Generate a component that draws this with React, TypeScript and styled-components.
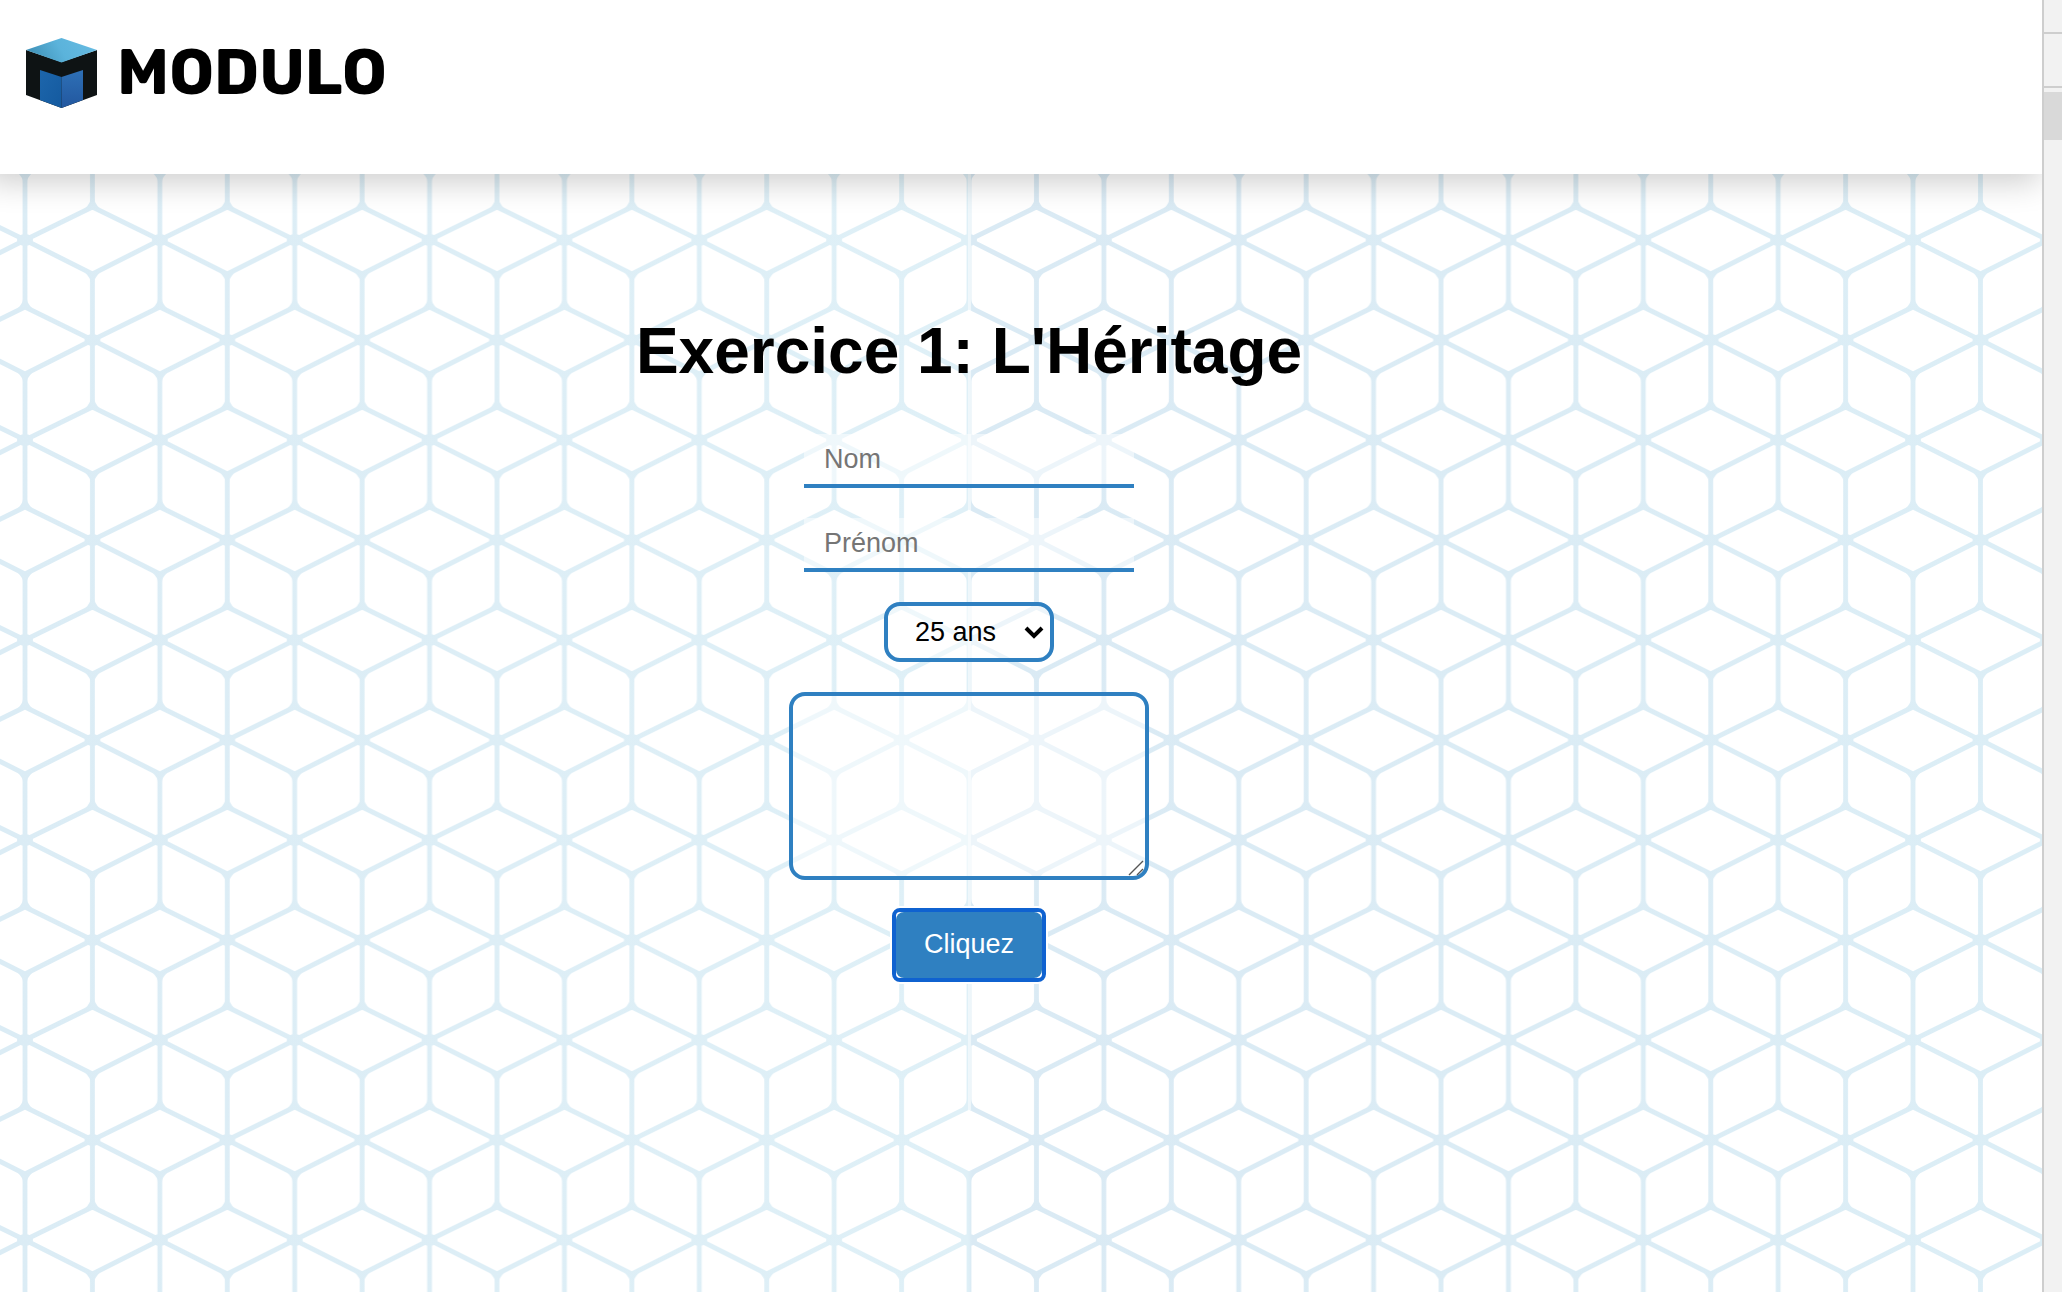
import React from "react";
import styled, { createGlobalStyle } from "styled-components";

const BLUE = "#2f80c1";

const GlobalStyle = createGlobalStyle`
  *, *::before, *::after { box-sizing: border-box; }
  body {
    margin: 0;
    background: #fff;
    font-family: "Liberation Sans", Arial, sans-serif;
  }
`;

const Shell = styled.div`
  display: flex;
  min-height: 100vh;
  overflow: hidden;
`;

const Page = styled.div`
  position: relative;
  flex: 1;
  min-width: 0;
  overflow: hidden;
`;

const Backdrop = styled.svg`
  position: absolute;
  inset: 0;
  width: 100%;
  height: 100%;
`;

const Header = styled.header`
  position: relative;
  height: 174px;
  padding: 38px 26px;
  background: #fff;
  box-shadow: -8px 2px 30px 6px rgba(0, 0, 0, 0.2);
`;

const Brand = styled.a`
  display: flex;
  align-items: center;
  gap: 20px;
  height: 70px;
  color: #000;
  text-decoration: none;
`;

const Cube = styled.svg`
  width: 71px;
  height: 70px;
`;

const Wordmark = styled.span`
  font-family: Rubik, Roboto, sans-serif;
  font-size: 63px;
  line-height: 70px;
  font-weight: 700;
`;

const Main = styled.main`
  position: relative;
  display: flex;
  flex-direction: column;
  align-items: center;
  padding: 140px 104px 80px 0;
`;

const Title = styled.h1`
  margin: 0 0 46px;
  font-size: 64px;
  line-height: 74px;
  font-weight: 700;
`;

const Form = styled.form`
  display: flex;
  flex-direction: column;
  align-items: center;
`;

const TextField = styled.input`
  width: 330px;
  height: 54px;
  margin-bottom: 30px;
  padding: 0 20px;
  border: 0;
  border-bottom: 4px solid ${BLUE};
  background: rgba(255, 255, 255, 0.5);
  font: 27px "Liberation Sans", Arial, sans-serif;
  outline: none;
  &::placeholder { color: #757575; }
`;

const SelectWrap = styled.div`
  position: relative;
  margin-bottom: 30px;
`;

const AgeSelect = styled.select`
  display: block;
  appearance: none;
  width: 170px;
  height: 60px;
  padding: 0 0 0 27px;
  border: 4px solid ${BLUE};
  border-radius: 16px;
  background: rgba(255, 255, 255, 0.5);
  color: #000;
  font: 27px "Liberation Sans", Arial, sans-serif;
`;

const Chevron = styled.svg`
  position: absolute;
  right: 10px;
  top: 23px;
  width: 20px;
  height: 14px;
  pointer-events: none;
`;

const MessageWrap = styled.div`
  position: relative;
  margin-bottom: 28px;
`;

const Message = styled.textarea`
  display: block;
  width: 360px;
  height: 188px;
  padding: 16px 20px;
  border: 4px solid ${BLUE};
  border-radius: 16px;
  background: rgba(255, 255, 255, 0.5);
  font: 27px "Liberation Sans", Arial, sans-serif;
  resize: none;
  outline: none;
`;

const Grip = styled.svg`
  position: absolute;
  right: 5px;
  bottom: 4px;
  width: 16px;
  height: 16px;
  pointer-events: none;
`;

const Submit = styled.button`
  width: 154px;
  height: 74px;
  padding: 0;
  border: 4px solid #0f62d0;
  border-radius: 8px;
  background: #fff;
  box-shadow: 0 0 0 2px #fff;
  color: #fff;
  font: 27px "Liberation Sans", Arial, sans-serif;
`;

const SubmitFace = styled.span`
  display: flex;
  align-items: center;
  justify-content: center;
  height: 100%;
  padding-bottom: 2px;
  border-radius: 8px;
  background: ${BLUE};
`;

const Rail = styled.aside`
  width: 20px;
  border-left: 2px solid #cecece;
  background: #f2f2f2;
`;

const RailCell = styled.div<{ $height: number }>`
  height: ${(p) => p.$height}px;
  border-bottom: 2px solid #cecece;
`;

const RailThumb = styled.div`
  height: 48px;
  margin-top: 4px;
  background: #d9d9d9;
`;

/* One repeat of the cube lattice: two stars and the lines that join them. */
const LATTICE =
  "M0 -66V67M134.86 -66V67M0 134V267M134.86 134V267M67.43 34V167" +
  "M67.43 -33L0 0L67.43 34L134.86 0L67.43 -33" +
  "M0 67L67.43 100L0 134M134.86 67L67.43 100L134.86 134" +
  "M67.43 167L0 200L67.43 234M67.43 167L134.86 200L67.43 234";

/* x, y, and 1 where the upright line arrives from above, -1 from below. */
const JOINTS: Array<[number, number, number]> = [
  [0, 67, 1], [134.86, 67, 1], [0, 134, -1], [134.86, 134, -1], [67.43, 34, -1], [67.43, 167, 1],
];
const STARS: Array<[number, number]> = [
  [0, 0], [134.86, 0], [67.43, 100], [0, 200], [134.86, 200],
];

function Lattice() {
  return (
    <Backdrop aria-hidden="true">
      <defs>
        <linearGradient id="tint" x1="0" x2="1" y1="0" y2="0">
          <stop offset="0" stopColor="#dbecf5" />
          <stop offset="0.474" stopColor="#dff0f7" />
          <stop offset="0.476" stopColor="#daeaf4" />
          <stop offset="1" stopColor="#dceef6" />
        </linearGradient>
        <pattern id="cubes" x="25" y="240" width="134.86" height="200" patternUnits="userSpaceOnUse">
          <path d={LATTICE} fill="none" stroke="#fff" strokeWidth="4.8" />
          {JOINTS.map(([x, y, s]) => (
            <path
              key={`${x}-${y}`}
              transform={`translate(${x} ${y}) scale(1 ${s})`}
              d="M-2 -8Q-2 -4 -7 1L0 0L7 1Q2 -4 2 -8Z"
              fill="#fff"
            />
          ))}
          {STARS.map(([x, y]) => (
            <ellipse key={`${x}-${y}`} cx={x} cy={y} rx="8" ry="6" fill="#fff" />
          ))}
        </pattern>
        <mask id="lines">
          <rect width="100%" height="100%" fill="url(#cubes)" />
        </mask>
      </defs>
      <rect width="100%" height="100%" fill="url(#tint)" mask="url(#lines)" />
      <rect x="968" y="0" width="3" height="1110" fill="#fff" fillOpacity="0.5" />
    </Backdrop>
  );
}

function CubeMark() {
  return (
    <Cube viewBox="0 0 71 70" aria-hidden="true">
      <defs>
        <linearGradient id="top" x1="0" x2="1" y1="0.6" y2="0.4">
          <stop offset="0" stopColor="#3d8fb5" />
          <stop offset="0.5" stopColor="#5bb3db" />
          <stop offset="1" stopColor="#66bbe2" />
        </linearGradient>
        <linearGradient id="left" x1="0" x2="1" y1="0" y2="1">
          <stop offset="0" stopColor="#1d66ac" />
          <stop offset="1" stopColor="#145a9f" />
        </linearGradient>
        <linearGradient id="right" x1="0" x2="0" y1="0" y2="1">
          <stop offset="0" stopColor="#2e70b6" />
          <stop offset="1" stopColor="#22579f" />
        </linearGradient>
      </defs>
      <path d="M0 12L35.500 24L71 12V57L35.500 70L0 57Z" fill="#0e1314" />
      <path d="M35.500 0L71 12L35.500 24.500L0 12Z" fill="url(#top)" />
      <path d="M14 32L35.500 39V70L14 62Z" fill="url(#left)" />
      <path d="M57 32L35.500 39V70L57 62Z" fill="url(#right)" />
    </Cube>
  );
}

export default function App() {
  return (
    <>
      <GlobalStyle />
      <Shell>
        <Page>
          <Lattice />
          <Header>
            <Brand href="#">
              <CubeMark />
              <Wordmark>MODULO</Wordmark>
            </Brand>
          </Header>
          <Main>
            <Title>Exercice 1: L'Héritage</Title>
            <Form onSubmit={(e) => e.preventDefault()}>
              <TextField type="text" placeholder="Nom" aria-label="Nom" />
              <TextField type="text" placeholder="Prénom" aria-label="Prénom" />
              <SelectWrap>
                <AgeSelect aria-label="Âge" defaultValue="25">
                  <option value="25">25 ans</option>
                </AgeSelect>
                <Chevron viewBox="0 0 20 14" aria-hidden="true">
                  <path d="M2 3L10 11L18 3" fill="none" stroke="#000" strokeWidth="4" />
                </Chevron>
              </SelectWrap>
              <MessageWrap>
                <Message aria-label="Message" />
                <Grip viewBox="0 0 16 16" aria-hidden="true">
                  <path d="M1 15L15 1M9 15L15 9" stroke="#555" strokeWidth="1.400" />
                </Grip>
              </MessageWrap>
              <Submit type="submit">
                <SubmitFace>Cliquez</SubmitFace>
              </Submit>
            </Form>
          </Main>
        </Page>
        <Rail>
          <RailCell $height={34} />
          <RailCell $height={54} />
          <RailThumb />
        </Rail>
      </Shell>
    </>
  );
}
